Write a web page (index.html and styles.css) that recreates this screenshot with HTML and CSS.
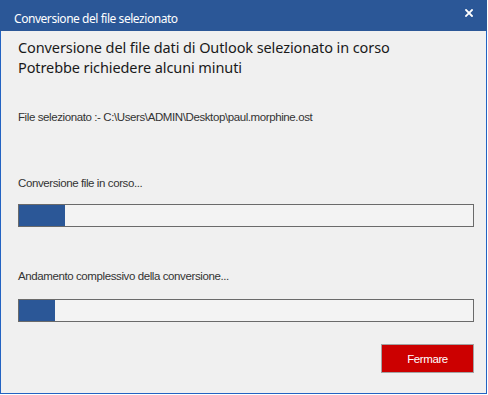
FILE: index.html
```html
<!DOCTYPE html>
<html lang="it">
<head>
  <meta charset="UTF-8">
  <title>Conversione del file selezionato</title>
  <link rel="stylesheet" href="styles.css">
</head>
<body>
  <div class="window">
    <!-- Title bar -->
    <div class="titlebar">
      <span class="title">Conversione del file selezionato</span>
      <button class="close" aria-label="Chiudi">
        <svg width="8" height="8" viewBox="0 0 8 8">
          <path d="M1 1 L7 7 M7 1 L1 7" stroke="#fff" stroke-width="1.8" stroke-linecap="square"/>
        </svg>
      </button>
    </div>

    <div class="content">
      <p class="heading">Conversione del file dati di Outlook selezionato in corso<br>Potrebbe richiedere alcuni minuti</p>

      <p class="file-path">File selezionato :- C:\Users\ADMIN\Desktop\paul.morphine.ost</p>

      <p class="label label-file">Conversione file in corso...</p>
      <div class="progress progress-file">
        <div class="fill" style="width: 46px"></div>
      </div>

      <p class="label label-total">Andamento complessivo della conversione...</p>
      <div class="progress progress-total">
        <div class="fill" style="width: 36px"></div>
      </div>

      <div class="actions">
        <button class="stop">Fermare</button>
      </div>
    </div>
  </div>
</body>
</html>
```

FILE: styles.css
```css
/* General Styles */
body {
  margin: 0;
  background-color: #fff;
  font-family: 'Noto Sans', sans-serif;
}

p {
  margin: 0;
}

.window {
  width: 487px;
  height: 394px;
  box-sizing: border-box;
  border: 1px solid #2363c2;
  border-top: none;
  background-color: #f0f0f0;
  display: flex;
  flex-direction: column;
}

/* Title Bar */
.titlebar {
  height: 31px;
  margin: 0 -1px;
  background-color: #2b5797;
  display: flex;
  justify-content: space-between;
  align-items: flex-start;
  padding: 0 13px 0 14px;
}

.title {
  color: #fff;
  font-size: 12px;
  letter-spacing: -0.45px;
  line-height: 20px;
  padding-top: 9px;
}

.close {
  background: none;
  border: none;
  padding: 0;
  margin-top: 8px;
  width: 10px;
  height: 10px;
  display: flex;
  align-items: center;
  justify-content: center;
  cursor: pointer;
}

/* Content */
.content {
  padding: 6px 12px 0 17px;
  display: flex;
  flex-direction: column;
}

.heading {
  font-size: 14.5px;
  letter-spacing: -0.1px;
  line-height: 20px;
  color: #1a1a1a;
}

.file-path,
.label {
  font-family: 'Liberation Sans', Arial, sans-serif;
  font-size: 11.5px;
  letter-spacing: -0.4px;
  line-height: 16px;
  color: #333;
}

.file-path {
  margin-top: 32px;
}

.label-file {
  margin-top: 50px;
}

.label-total {
  margin-top: 41px;
}

/* Progress Bars */
.progress {
  width: 456px;
  height: 23px;
  box-sizing: border-box;
  border: 1px solid #6a6a6a;
  background-color: #f3f3f3;
}

.progress-file {
  margin-top: 13px;
}

.progress-total {
  margin-top: 15px;
}

.fill {
  height: 100%;
  background-color: #2b5797;
}

/* Stop Button */
.actions {
  width: 456px;
  display: flex;
  justify-content: flex-end;
  margin-top: 22px;
}

.stop {
  width: 93px;
  height: 29px;
  background-color: #cc0000;
  border: 1px solid #a3a3a3;
  color: #fff;
  font-family: 'Liberation Sans', Arial, sans-serif;
  font-size: 11.5px;
  letter-spacing: -0.4px;
  cursor: pointer;
}
```
